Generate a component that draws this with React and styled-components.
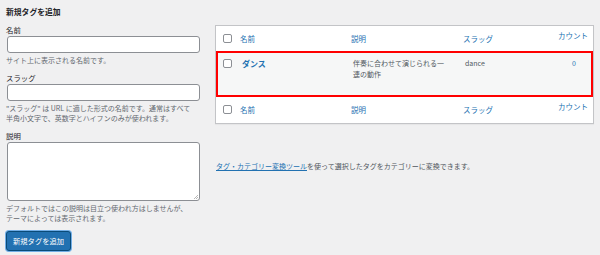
import React from 'react';
import styled, { createGlobalStyle } from 'styled-components';

const GlobalStyle = createGlobalStyle`
    html, body {
        margin: 0;
        padding: 0;
        background: #f0f0f1;
        font-family: "Noto Sans CJK JP", "Noto Sans", sans-serif;
        color: #3c434a;
    }
`;

const StyledPage = styled.div`
    display: flex;
    align-items: flex-start;
    width: 600px;
    height: 255px;
    padding-left: 6px;
    box-sizing: border-box;
    overflow: hidden;
`;

const StyledFormCol = styled.div`
    width: 194px;
    display: flex;
    flex-direction: column;
    padding-top: 6px;
`;

const StyledTitle = styled.div`
    font-size: 7.8px;
    font-weight: bold;
    line-height: 12px;
    color: #1d2327;
    margin-bottom: 6px;
`;

const StyledLabel = styled.div`
    font-size: 7.4px;
    line-height: 11px;
    color: #1d2327;
    margin-bottom: 1px;
`;

const StyledInput = styled.div`
    height: ${props => props.tall ? '59px' : '17px'};
    margin-left: 1px;
    box-sizing: border-box;
    background: #fff;
    border: 1px solid #8c8f94;
    border-radius: 3px;
    position: relative;
`;

const StyledGrip = styled.svg`
    position: absolute;
    right: 1px;
    bottom: 1px;
`;

const StyledHelp = styled.div`
    font-size: 7px;
    line-height: 10.5px;
    color: #646970;
    margin-top: 2px;
    margin-bottom: ${props => props.gap || 6}px;
    white-space: nowrap;
`;

const StyledButton = styled.div`
    align-self: flex-start;
    height: 20px;
    box-sizing: border-box;
    padding: 0 6px;
    display: flex;
    align-items: center;
    font-size: 7.3px;
    color: #fff;
    background: #2271b1;
    border: 1px solid #0a4b78;
    border-radius: 3px;
    box-shadow: 0 0 0 1px #72aee6;
    margin-top: 2px;
`;

const StyledListCol = styled.div`
    margin-left: 15px;
    width: 379px;
    padding-top: 25px;
`;

const StyledTable = styled.div`
    background: #fff;
    border: 1px solid #c3c4c7;
    box-shadow: 0 1px 1px rgba(0, 0, 0, 0.04);
`;

const StyledRow = styled.div`
    display: grid;
    grid-template-columns: 24px 111px 112px 80px 1fr;
    box-sizing: border-box;
    height: ${props => props.h}px;
    background: ${props => props.selected ? '#f6f7f7' : '#fff'};
    border: ${props => props.selected ? '2px solid #f00' : 'none'};
    padding-top: ${props => props.selected ? 5 : 7}px;
`;

const StyledCell = styled.div`
    font-size: ${props => props.head ? '7.5px' : '7px'};
    line-height: 11px;
    color: ${props => props.link ? '#2271b1' : '#50575e'};
    font-weight: ${props => props.bold ? 'bold' : 'normal'};
    text-align: ${props => props.right ? 'right' : 'left'};
    padding-right: ${props => props.pr || 0}px;
    margin-top: ${props => props.up || 0}px;
    ${props => props.bold ? 'font-size: 8px;' : ''}
`;

const StyledCheck = styled.div`
    width: 9px;
    height: 9px;
    box-sizing: border-box;
    border: 1px solid #8c8f94;
    border-radius: 2px;
    background: #fff;
    margin-left: ${props => props.selected ? 5 : 7}px;
    margin-top: 1px;
`;

const StyledNote = styled.div`
    margin-top: 37px;
    font-size: 7px;
    line-height: 11px;
    color: #50575e;
    padding-left: 1px;
`;

const StyledLink = styled.span`
    color: #2271b1;
    text-decoration: underline;
`;

const HeadRow = ({ h }) => (
    <StyledRow h={h}>
        <StyledCheck />
        <StyledCell head link>名前</StyledCell>
        <StyledCell head link>説明</StyledCell>
        <StyledCell head link>スラッグ</StyledCell>
        <StyledCell head link right pr={5} up={-3}>カウント</StyledCell>
    </StyledRow>
);

const App = () => (
    <StyledPage>
        <GlobalStyle />
        <StyledFormCol>
            <StyledTitle>新規タグを追加</StyledTitle>
            <StyledLabel>名前</StyledLabel>
            <StyledInput />
            <StyledHelp>サイト上に表示される名前です。</StyledHelp>
            <StyledLabel>スラッグ</StyledLabel>
            <StyledInput />
            <StyledHelp>
                "スラッグ" は URL に適した形式の名前です。通常はすべて<br />
                半角小文字で、英数字とハイフンのみが使われます。
            </StyledHelp>
            <StyledLabel>説明</StyledLabel>
            <StyledInput tall>
                <StyledGrip width="5" height="5" viewBox="0 0 5 5">
                    <path d="M1 5 L5 1 M3 5 L5 3" stroke="#999" strokeWidth="0.7" />
                </StyledGrip>
            </StyledInput>
            <StyledHelp gap={5}>
                デフォルトではこの説明は目立つ使われ方はしませんが、<br />
                テーマによっては表示されます。
            </StyledHelp>
            <StyledButton>新規タグを追加</StyledButton>
        </StyledFormCol>
        <StyledListCol>
            <StyledTable>
                <HeadRow h={25} />
                <StyledRow h={46} selected>
                    <StyledCheck selected />
                    <StyledCell link bold>ダンス</StyledCell>
                    <StyledCell>伴奏に合わせて演じられる一<br />連の動作</StyledCell>
                    <StyledCell>dance</StyledCell>
                    <StyledCell link right pr={15}>0</StyledCell>
                </StyledRow>
                <HeadRow h={26} />
            </StyledTable>
            <StyledNote>
                <StyledLink>タグ・カテゴリー変換ツール</StyledLink>を使って選択したタグをカテゴリーに変換できます。
            </StyledNote>
        </StyledListCol>
    </StyledPage>
);

export default App;
